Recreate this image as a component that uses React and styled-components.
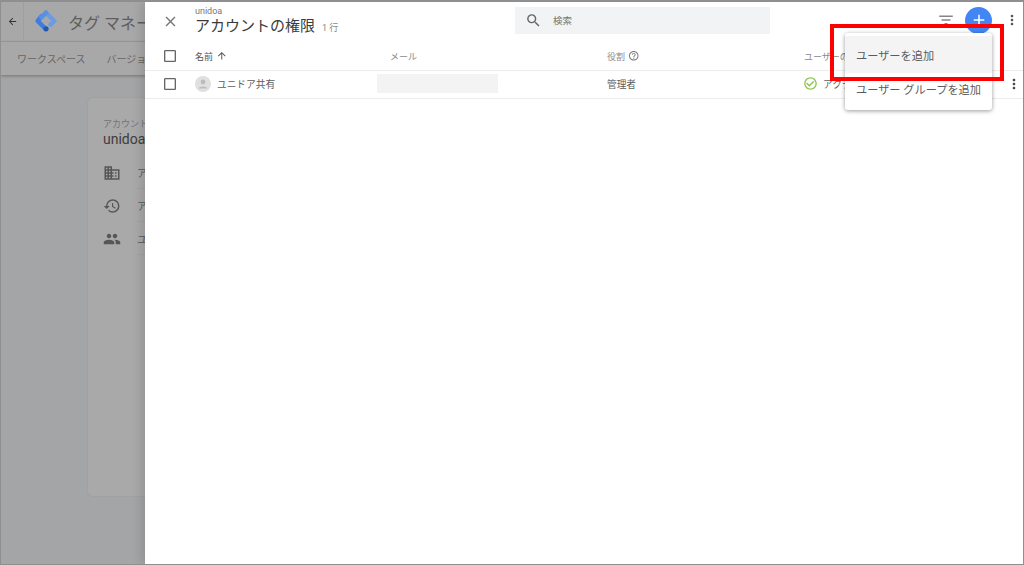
import React from 'react'
import styled, { createGlobalStyle } from 'styled-components'
import {
  MdArrowBack, MdArrowUpward, MdClose, MdSearch, MdAdd, MdHelpOutline, MdMoreVert,
  MdFilterList, MdBusiness, MdHistory, MdPeople, MdCheckCircleOutline, MdCheckBoxOutlineBlank,
} from 'react-icons/md'

const GlobalStyle = createGlobalStyle`
  html, body { margin: 0; padding: 0; background: #fff; }
  body { font-family: Roboto, "Noto Sans CJK JP", sans-serif; overflow: hidden; }
`

const Page = styled.div`
  position: relative;
  width: 1024px;
  height: 565px;
  box-sizing: border-box;
  border: 1px solid #8f8f8f;
  border-top-width: 2px;
  background: #a4a5a7;
  overflow: hidden;
`

const AppBar = styled.div`
  height: 40px;
  box-sizing: border-box;
  display: flex;
  align-items: center;
  background: #a8a8a8;
  border-bottom: 1px solid #9c9c9c;
`

const BackCell = styled.div`
  width: 22px;
  height: 100%;
  display: flex;
  align-items: center;
  justify-content: center;
  border-right: 1px solid #9e9e9e;
  color: #333;
`

const Logo = styled.svg`
  width: 22px;
  height: 22px;
  margin: -1px 11px 0 11px;
`

const AppTitle = styled.div`
  font-size: 16px;
  color: #5e5e5e;
  white-space: nowrap;
`

const TabBar = styled.div`
  height: 33px;
  display: flex;
  align-items: center;
  gap: 21px;
  padding-left: 16px;
  background: #a8a8a8;
  box-shadow: 0 1px 3px rgba(0, 0, 0, 0.3);
  font-size: 10px;
  color: #666;
  white-space: nowrap;
`

const Content = styled.div`
  padding: 22px 0 0 86px;
`

const Card = styled.div`
  width: 200px;
  height: 400px;
  box-sizing: border-box;
  padding: 21px 0 0 15px;
  background: #a9a9a9;
  border: 1px solid #a1a1a1;
  border-radius: 6px;
`

const CardLabel = styled.div`
  font-size: 9px;
  line-height: 10px;
  color: #747474;
  white-space: nowrap;
`

const CardName = styled.div`
  margin: 2px 0 8px;
  font-size: 14px;
  line-height: 17px;
  color: #3d3d3d;
`

const CardRow = styled.div`
  display: flex;
  align-items: center;
  color: #565656;
`

const CardIcon = styled.div`
  width: 34px;
  display: flex;
  font-size: 18px;
`

const CardRowText = styled.div`
  flex: 1;
  height: 33px;
  box-sizing: border-box;
  display: flex;
  align-items: center;
  font-size: 10px;
  border-bottom: 1px solid #a2a2a2;
`

const Drawer = styled.div`
  position: absolute;
  top: 0;
  left: 144px;
  right: 0;
  bottom: 0;
  background: #fff;
  box-shadow: -3px 0 10px rgba(0, 0, 0, 0.14);
`

const DrawerHeader = styled.div`
  height: 40px;
  box-sizing: border-box;
  padding-bottom: 4px;
  display: flex;
  align-items: center;
`

const CloseCell = styled.div`
  width: 50px;
  display: flex;
  justify-content: center;
  font-size: 17px;
  color: #777;
  padding-top: 2px;
`

const TitleBlock = styled.div`
  width: 320px;
  padding-top: 4px;
`

const Eyebrow = styled.div`
  font-size: 9px;
  line-height: 9px;
  color: #777;
`

const TitleLine = styled.div`
  display: flex;
  align-items: baseline;
  gap: 7px;
  font-size: 15px;
  line-height: 20px;
  color: #3b3b3b;
`

const RowCount = styled.span`
  font-size: 9px;
  color: #888;
`

const SearchBox = styled.div`
  width: 255px;
  height: 27px;
  display: flex;
  align-items: center;
  gap: 11px;
  padding-left: 10px;
  box-sizing: border-box;
  background: #f1f3f4;
  font-size: 9.5px;
  color: #777;
`

const SearchIcon = styled(MdSearch)`
  font-size: 17px;
  color: #666;
`

const HeaderActions = styled.div`
  margin-left: auto;
  display: flex;
  align-items: center;
  color: #555;
  font-size: 16px;
  padding-right: 3px;
`

const FilterIcon = styled(MdFilterList)`
  font-size: 18px;
  color: #858585;
  margin-right: 10px;
`

const AddButton = styled.div`
  width: 27px;
  height: 27px;
  border-radius: 50%;
  background: #4285f4;
  color: #fff;
  font-size: 18px;
  display: flex;
  align-items: center;
  justify-content: center;
  margin-right: 12px;
`

const Row = styled.div`
  height: ${p => p.$height}px;
  padding-bottom: ${p => p.$lift || 0}px;
  display: grid;
  grid-template-columns: 50px 183px 229px 197px 1fr;
  align-items: center;
  box-sizing: border-box;
  border-bottom: 1px solid #ececec;
`

const Check = styled(MdCheckBoxOutlineBlank)`
  justify-self: center;
  font-size: 16px;
  color: #666;
`

const HeadCell = styled.div`
  display: flex;
  align-items: center;
  gap: 3px;
  font-size: 9px;
  color: ${p => p.$dark ? '#555' : '#8a8a8a'};
  padding-left: ${p => p.$inset || 0}px;
  white-space: nowrap;
  overflow: hidden;
`

const HeadIcon = styled.span`
  display: flex;
  font-size: 11.5px;
  color: ${p => p.$dark ? '#555' : '#777'};
`

const Cell = styled.div`
  display: flex;
  align-items: center;
  gap: 6px;
  font-size: 9.7px;
  color: #5c5c5c;
  white-space: nowrap;
`

const Avatar = styled.svg`
  width: 16px;
  height: 16px;
`

const StatusCell = styled(Cell)`
  gap: 5px;
  overflow: hidden;
`

const StatusIcon = styled(MdCheckCircleOutline)`
  font-size: 15px;
  color: #8bc34a;
  flex-shrink: 0;
  margin-left: -1px;
`

const MaskedEmail = styled.div`
  width: 121px;
  height: 19px;
  margin-left: -1px;
  flex-shrink: 0;
  background: #f3f3f3;
`

const RowMenu = styled.div`
  position: absolute;
  top: 74px;
  right: 1px;
  display: flex;
  font-size: 16px;
  color: #444;
`

const Menu = styled.div`
  position: absolute;
  top: 31px;
  left: 844px;
  width: 147px;
  padding: 3px 0 6px;
  background: #fff;
  border-radius: 3px;
  box-shadow: 0 1px 4px rgba(0, 0, 0, 0.4);
`

const MenuItem = styled.div`
  height: ${p => p.$active ? 37 : 31}px;
  display: flex;
  align-items: center;
  padding-left: 11px;
  font-size: 11.2px;
  color: #5b5b5b;
  white-space: nowrap;
  background: ${p => p.$active ? '#f4f4f4' : 'transparent'};
`

const Highlight = styled.div`
  position: absolute;
  top: 22px;
  left: 829px;
  width: 174px;
  height: 57px;
  box-sizing: border-box;
  border: 4px solid #f00;
`

export default function App() {
  return (
    <Page>
      <GlobalStyle />
      <AppBar>
        <BackCell><MdArrowBack size={11} /></BackCell>
        <Logo viewBox="0 0 24 24">
          <path d="M7 7 L3 12 L12 21" stroke="#3f7be0" strokeWidth="5" strokeLinecap="round" strokeLinejoin="round" fill="none" />
          <path d="M12 3 L21 12 L17 16" stroke="#6c9be3" strokeWidth="5" strokeLinecap="round" strokeLinejoin="round" fill="none" />
          <path d="M12 3 L7 8" stroke="#5b8fe3" strokeWidth="5" strokeLinecap="round" fill="none" />
          <circle cx="12" cy="20.5" r="2.8" fill="#2458ad" />
        </Logo>
        <AppTitle>タグ マネージャー</AppTitle>
      </AppBar>
      <TabBar>
        <span>ワークスペース</span>
        <span>バージョン</span>
      </TabBar>
      <Content>
        <Card>
          <CardLabel>アカウント</CardLabel>
          <CardName>unidoa</CardName>
          <CardRow><CardIcon><MdBusiness /></CardIcon><CardRowText>ア</CardRowText></CardRow>
          <CardRow><CardIcon><MdHistory /></CardIcon><CardRowText>ア</CardRowText></CardRow>
          <CardRow><CardIcon><MdPeople /></CardIcon><CardRowText>ユ</CardRowText></CardRow>
        </Card>
      </Content>

      <Drawer>
        <DrawerHeader>
          <CloseCell><MdClose /></CloseCell>
          <TitleBlock>
            <Eyebrow>unidoa</Eyebrow>
            <TitleLine>アカウントの権限<RowCount>1 行</RowCount></TitleLine>
          </TitleBlock>
          <SearchBox><SearchIcon />検索</SearchBox>
          <HeaderActions>
            <FilterIcon />
            <AddButton><MdAdd /></AddButton>
            <MdMoreVert />
          </HeaderActions>
        </DrawerHeader>
        <Row $height={29}>
          <Check />
          <HeadCell $dark>名前<HeadIcon $dark><MdArrowUpward /></HeadIcon></HeadCell>
          <HeadCell $inset={12}>メール</HeadCell>
          <HeadCell>役割<HeadIcon><MdHelpOutline /></HeadIcon></HeadCell>
          <HeadCell>ユーザーの状態</HeadCell>
        </Row>
        <Row $height={28} $lift={2}>
          <Check />
          <Cell>
            <Avatar viewBox="0 0 16 16">
              <circle cx="8" cy="8" r="8" fill="#e0e0e0" />
              <circle cx="8" cy="6" r="2.4" fill="#bdbdbd" />
              <path d="M3.5 12.5 C4 9.8 12 9.8 12.5 12.5 Z" fill="#bdbdbd" />
            </Avatar>
            ユニドア共有
          </Cell>
          <Cell><MaskedEmail /></Cell>
          <Cell>管理者</Cell>
          <StatusCell><StatusIcon />アクティブ</StatusCell>
        </Row>
        <RowMenu><MdMoreVert /></RowMenu>
      </Drawer>

      <Menu>
        <MenuItem $active>ユーザーを追加</MenuItem>
        <MenuItem>ユーザー グループを追加</MenuItem>
      </Menu>
      <Highlight />
    </Page>
  )
}
